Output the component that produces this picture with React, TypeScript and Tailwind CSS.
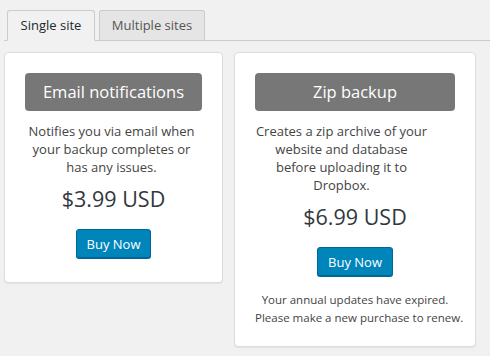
import React from 'react'

interface AddonProps {
  title: string
  description: string
  price: string
  width: string
  note?: string[]
}

function AddonCard({ title, description, price, width, note }: AddonProps) {
  return (
    <div
      className={`${width} rounded-[4px] border border-[#dcdcdc] bg-white px-[20px] pt-[20px] shadow-[0_1px_1px_rgba(0,0,0,0.06)] ${
        note ? 'pb-[19px]' : 'pb-[24px]'
      }`}
    >
      <div className="flex h-[38px] items-center justify-center rounded-[4px] bg-[#777777] text-[16.5px] text-white">
        {title}
      </div>
      <p className="mt-[11px] max-w-[173px] text-center text-[13px] leading-[18px] text-[#444]">{description}</p>
      <div className="mt-[8px] text-center text-[21.5px] leading-[30px] text-[#32373c]">{price}</div>
      <div className="mt-[15px] flex justify-center">
        <button className="h-[29px] rounded-[3px] border border-[#006799] bg-[#0085ba] px-[10px] text-[13px] leading-[26px] text-white shadow-[0_1px_0_#006799]">
          Buy Now
        </button>
      </div>
      {note && (
        <p className="mt-[15px] whitespace-nowrap text-center text-[11.5px] leading-[18px] text-[#444]">
          {note[0]}
          <br />
          {note[1]}
        </p>
      )}
    </div>
  )
}

export default function App() {
  return (
    <div className="min-h-[356px] bg-[#f1f1f1] pt-[10px] font-['Open_Sans',sans-serif]">
      <div className="ml-[4px] flex gap-[4px] border-b border-[#cccccc] pl-[3px]">
        <div className="-mb-px h-[31px] w-[88px] rounded-t-[3px] border border-[#cccccc] border-b-[#f1f1f1] bg-[#f1f1f1] text-center text-[13px] leading-[28px] text-[#23282d]">
          Single site
        </div>
        <div className="h-[30px] w-[106px] rounded-t-[3px] border border-b-0 border-[#cccccc] bg-[#e5e5e5] text-center text-[13px] leading-[28px] text-[#555]">
          Multiple sites
        </div>
      </div>

      <div className="ml-[4px] mt-[11px] flex items-start gap-[11px]">
        <AddonCard
          width="w-[219px]"
          title="Email notifications"
          description="Notifies you via email when your backup completes or has any issues."
          price="$3.99 USD"
        />
        <AddonCard
          width="w-[242px]"
          title="Zip backup"
          description="Creates a zip archive of your website and database before uploading it to Dropbox."
          price="$6.99 USD"
          note={['Your annual updates have expired.', 'Please make a new purchase to renew.']}
        />
      </div>
    </div>
  )
}
